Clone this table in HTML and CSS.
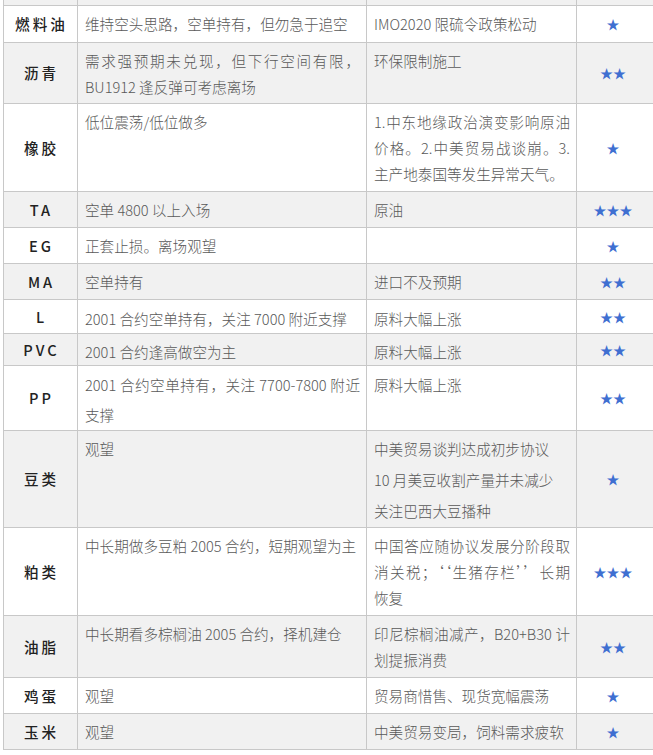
FILE: index.html
```html
<!DOCTYPE html>
<html lang="zh-CN">
<head>
<meta charset="utf-8">
<title>品种观点</title>
<link rel="stylesheet" href="styles.css">
</head>
<body>
<table class="tbl">
  <colgroup>
    <col class="c-name"><col class="c-view"><col class="c-reason"><col class="c-star">
  </colgroup>
  <tbody>
    <tr class="row-cut"><th></th><td></td><td></td><td></td></tr>
    <tr class="r-first">
      <th>燃料油</th>
      <td>维持空头思路，空单持有，但勿急于追空</td>
      <td>IMO2020 限硫令政策松动</td>
      <td class="stars">★</td>
    </tr>
    <tr class="r-tight">
      <th>沥青</th>
      <td>需求强预期未兑现，但下行空间有限，BU1912 逢反弹可考虑离场</td>
      <td>环保限制施工</td>
      <td class="stars">★★</td>
    </tr>
    <tr>
      <th>橡胶</th>
      <td>低位震荡/低位做多</td>
      <td><span class="ln jl">1.中东地缘政治演变影响原油</span><span class="ln jl">价格。2.中美贸易战谈崩。3.</span><span class="ln">主产地泰国等发生异常天气。</span></td>
      <td class="stars">★</td>
    </tr>
    <tr>
      <th>TA</th>
      <td>空单 4800 以上入场</td>
      <td>原油</td>
      <td class="stars">★★★</td>
    </tr>
    <tr>
      <th>EG</th>
      <td>正套止损。离场观望</td>
      <td></td>
      <td class="stars">★</td>
    </tr>
    <tr>
      <th>MA</th>
      <td>空单持有</td>
      <td>进口不及预期</td>
      <td class="stars">★★</td>
    </tr>
    <tr class="r-l">
      <th>L</th>
      <td>2001 合约空单持有，关注 7000 附近支撑</td>
      <td>原料大幅上涨</td>
      <td class="stars">★★</td>
    </tr>
    <tr class="r-pvc">
      <th>PVC</th>
      <td>2001 合约逢高做空为主</td>
      <td>原料大幅上涨</td>
      <td class="stars">★★</td>
    </tr>
    <tr class="r-pp">
      <th>PP</th>
      <td>2001 合约空单持有，关注 7700-7800 附近支撑</td>
      <td>原料大幅上涨</td>
      <td class="stars">★★</td>
    </tr>
    <tr class="r-beans">
      <th>豆类</th>
      <td>观望</td>
      <td><p class="para">中美贸易谈判达成初步协议</p><p class="para">10 月美豆收割产量并未减少</p><p class="para">关注巴西大豆播种</p></td>
      <td class="stars">★</td>
    </tr>
    <tr>
      <th>粕类</th>
      <td class="nowrap">中长期做多豆粕 2005 合约，短期观望为主</td>
      <td><span class="ln jl">中国答应随协议发展分阶段取</span><span class="ln jl">消关税；‘‘生猪存栏’’长期</span><span class="ln">恢复</span></td>
      <td class="stars">★★★</td>
    </tr>
    <tr>
      <th>油脂</th>
      <td>中长期看多棕榈油 2005 合约，择机建仓</td>
      <td><span class="ln jl">印尼棕榈油减产，B20+B30 计</span><span class="ln">划提振消费</span></td>
      <td class="stars">★★</td>
    </tr>
    <tr>
      <th>鸡蛋</th>
      <td>观望</td>
      <td>贸易商惜售、现货宽幅震荡</td>
      <td class="stars">★</td>
    </tr>
    <tr>
      <th>玉米</th>
      <td>观望</td>
      <td class="nowrap">中美贸易变局，饲料需求疲软</td>
      <td class="stars">★</td>
    </tr>
  </tbody>
</table>
</body>
</html>
```

FILE: styles.css
```css
html, body {
  margin: 0;
  padding: 0;
  background: #ffffff;
  overflow: hidden;
}

.tbl {
  border-collapse: collapse;
  table-layout: fixed;
  width: 651px;
  margin-left: 3px;
  font-family: "Noto Sans CJK SC", "Noto Sans", sans-serif;
  font-size: 14.6px;
  color: #595959;
}

.c-name { width: 74px; }
.c-view { width: 289px; }
.c-reason { width: 210px; }
.c-star { width: 78px; }

.tbl th,
.tbl td {
  border: 1px solid #c8c8c8;
  padding: 5px 6px 4px 7px;
  line-height: 26px;
  vertical-align: top;
  text-align: justify;
  font-weight: 300;
}

.tbl th {
  vertical-align: middle;
  text-align: center;
  color: #222222;
  font-weight: 500;
  letter-spacing: 3px;
  padding: 0 0 0 2px;
}

.tbl tr:nth-child(odd) {
  background: #f1f1f1;
}

.row-cut th,
.row-cut td {
  border-top: 0;
  height: 5px;
  padding: 0;
  line-height: 0;
}

.r-first td {
  padding-bottom: 5px;
}

.r-tight td {
  padding-bottom: 3px;
}

.r-l td {
  padding-top: 6px;
  padding-bottom: 1px;
}

.r-pvc td {
  padding-top: 5px;
  padding-bottom: 0;
}

.r-pp td {
  padding-top: 4px;
  padding-bottom: 0;
  line-height: 30px;
}

.r-beans td {
  padding-bottom: 3px;
}

.tbl .stars {
  vertical-align: middle;
  text-align: center;
  color: #3f6fd1;
  font-size: 13px;
  line-height: 26px;
  letter-spacing: 0;
  padding: 0 5px 0 0;
}

.ln { display: block; }
.jl { text-align-last: justify; }

.para { margin: 0 0 5px; }
.para:last-child { margin-bottom: 0; }

.nowrap { white-space: nowrap; }
```
